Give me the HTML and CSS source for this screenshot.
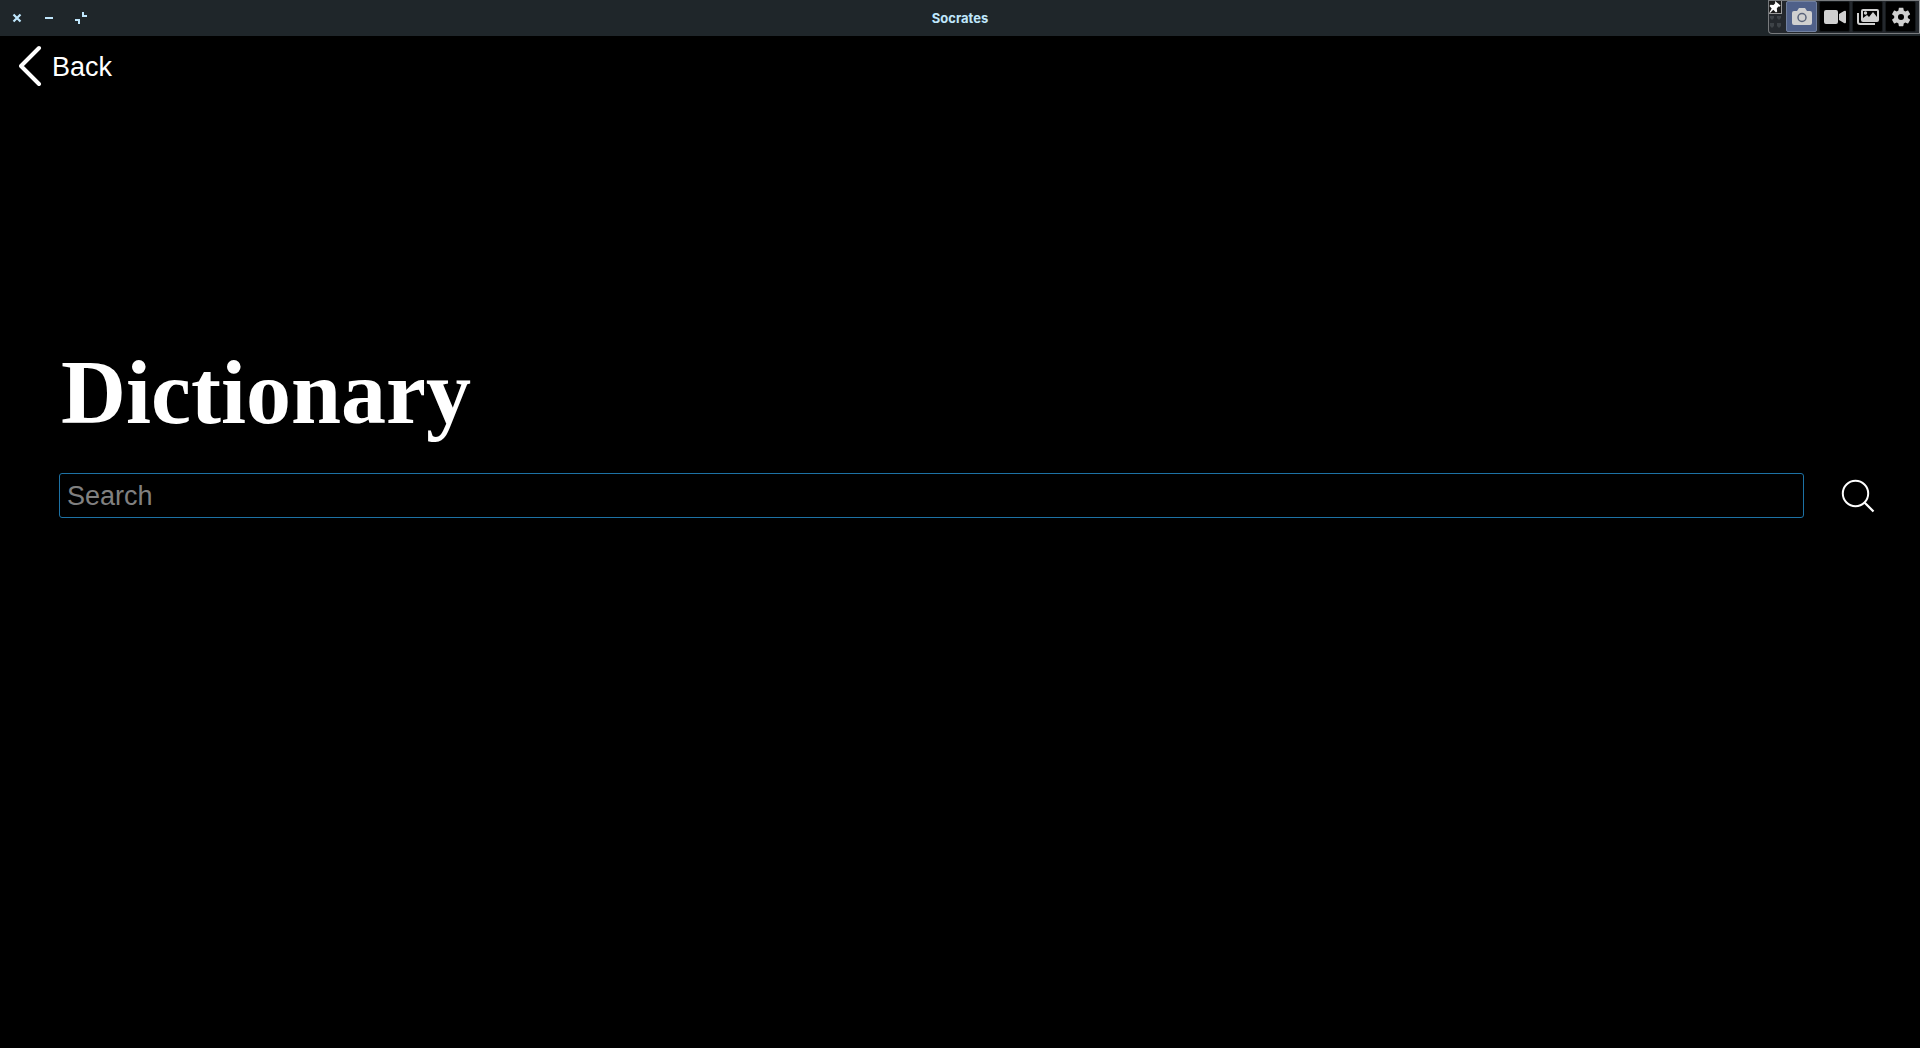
FILE: index.html
```html
<!DOCTYPE html>
<html lang="en">
<head>
<meta charset="utf-8">
<title>Socrates</title>
<link rel="stylesheet" href="styles.css">
</head>
<body>
<header class="titlebar">
  <div class="window-controls">
    <button class="window-button" aria-label="Close"><svg width="10" height="10" viewBox="0 0 10 10"><path d="M1.500 1.500l7 7M8.500 1.500l-7 7" stroke="currentColor" stroke-width="2.200"/></svg></button>
    <button class="window-button" aria-label="Minimize"><svg width="10" height="10" viewBox="0 0 10 10"><path d="M1 5h8" stroke="currentColor" stroke-width="2"/></svg></button>
    <button class="window-button" aria-label="Restore"><svg width="12" height="12" viewBox="0 0 12 12"><path d="M8 0v4h4M0 8h4v4" fill="none" stroke="currentColor" stroke-width="2"/></svg></button>
  </div>
  <span class="window-title">Socrates</span>
  <div class="capture-bar">
    <div class="grip">
      <button class="pin" aria-label="Pin"><svg width="12" height="12" viewBox="0 0 12 12"><path d="M6 0l5.500 4.500-1 1.300-1.200-.2-1.500 1.800.4 3.200-1.200.9-2.700-2.700L1 12l-.6-.6 2.300-3.800L.5 5l1-1.300 3 .3L6.200 2.300z" fill="#fff"/></svg></button>
      <svg width="15" height="16" viewBox="0 0 15 16"><path d="M1 2h4v2L3 6 1 4zM8 2h4v2l-2 2-2-2zM1 9h4v3l-2 2-2-2zM8 9h4v3l-2 2-2-2z" fill="#3d4247"/></svg>
    </div>
    <button class="tool tool-active" aria-label="Screenshot"><svg width="20" height="18" viewBox="0 0 20 18"><path d="M2 3h3l2-3h6l2 3h3q2 0 2 2v10q0 2-2 2H2q-2 0-2-2V5q0-2 2-2z" fill="#d0d0d0"/><circle cx="10" cy="9.500" r="4" fill="none" stroke="#59637a" stroke-width="1.500"/></svg></button>
    <button class="tool" aria-label="Record video"><svg width="24" height="16" viewBox="0 0 24 16"><path d="M3 1h10q2 0 2 2v10q0 2-2 2H3q-2 0-2-2V3q0-2 2-2zM16 5l5-3q2-1 2 1v10q0 2-2 1l-5-3z" fill="#d0d0d0"/></svg></button>
    <button class="tool" aria-label="Gallery"><svg width="22" height="18" viewBox="0 0 22 18"><path d="M1 5v9q0 2 2 2h15" fill="none" stroke="#d0d0d0" stroke-width="2"/><rect x="5" y="2" width="16" height="11" rx="1" fill="none" stroke="#d0d0d0" stroke-width="2"/><circle cx="8.500" cy="5" r="1.700" fill="#d0d0d0"/><path d="M6 12V10l4-3 2 2 4-5 4 5v3z" fill="#d0d0d0"/></svg></button>
    <button class="tool" aria-label="Settings"><svg width="22" height="22" viewBox="0 0 24 24"><path fill="#d0d0d0" d="M19.400 13c0-.3.100-.7.100-1s0-.7-.1-1l2.400-1.700c.2-.2.200-.4.100-.7l-2-3.500c-.1-.2-.4-.3-.7-.2l-2.500 1.100a8 8 0 0 0-1.700-1l-.4-2.600c0-.3-.3-.4-.5-.4h-4c-.3 0-.5.200-.5.400L9.200 5a8 8 0 0 0-1.700 1L5 4.900c-.3-.1-.6 0-.7.200l-2 3.500c-.1.300-.1.500.1.700L4.600 11a8 8 0 0 0 0 2l-2.200 1.700c-.2.200-.2.400-.1.700l2 3.500c.1.200.4.300.7.200L7.500 18a8 8 0 0 0 1.700 1l.4 2.600c0 .2.200.4.500.4h4c.2 0 .5-.1.500-.4L15 19a8 8 0 0 0 1.700-1l2.500 1.100c.3.100.6 0 .7-.2l2-3.500c.1-.3.100-.5-.1-.7zM12 15.300a3.300 3.300 0 1 1 0-6.600 3.300 3.300 0 0 1 0 6.600z"/></svg></button>
  </div>
</header>
<nav>
  <a class="back" href="#"><svg width="24" height="42" viewBox="0 0 24 42"><path d="M20 3L2 21l18 18" fill="none" stroke="#fff" stroke-width="4" stroke-linecap="round" stroke-linejoin="round"/></svg><span>Back</span></a>
</nav>
<main>
  <h1><label for="query">Dictionary</label></h1>
  <form class="search">
    <input class="query" id="query" type="text" placeholder="Search">
    <button type="button" aria-label="Search"><svg width="34" height="34" viewBox="0 0 34 34"><circle cx="14.500" cy="14.500" r="12.700" fill="none" stroke="#fff" stroke-width="2"/><path d="M23.500 23.500l9 9" stroke="#fff" stroke-width="2.200"/></svg></button>
  </form>
</main>
</body>
</html>
```
FILE: styles.css
```css
* { box-sizing: border-box; }
body {
  margin: 0;
  background: #000;
  color: #fff;
  font-family: "Liberation Sans", Arial, sans-serif;
}
button {
  padding: 0;
  border: 0;
  background: none;
  color: inherit;
  display: flex;
  align-items: center;
  justify-content: center;
}
svg { display: block; flex: none; }
.titlebar {
  height: 36px;
  display: grid;
  grid-template-columns: 1fr auto 1fr;
  align-items: center;
  background: #1f262a;
  color: #bfe6fc;
}
.window-controls {
  display: flex;
  gap: 16px;
  padding-left: 9px;
}
.window-button { width: 16px; height: 16px; }
.window-title {
  font: 700 13px/16px Inter, sans-serif;
  padding-bottom: 1px;
}
.capture-bar {
  justify-self: end;
  align-self: start;
  display: flex;
  gap: 2px;
  height: 34px;
  padding-right: 3px;
  background: #24282d;
  border: 1px solid #777a7d;
  border-right-color: #999c9f;
  border-bottom-left-radius: 4px;
}
.grip { width: 15px; }
.pin {
  width: 13px;
  height: 13px;
  background: #1c1c1c;
  border-right: 1px solid #999;
  border-bottom: 1px solid #999;
}
.tool {
  width: 31px;
  height: 31px;
  background: #000;
  border: 1px solid #15191c;
  border-radius: 2px;
}
.tool-active {
  background: #4f6089;
  border-color: #71809f;
}
.back {
  display: inline-flex;
  align-items: center;
  gap: 9px;
  margin: 9px 0 0 19px;
  color: #fff;
  font-size: 27px;
  line-height: 42px;
  text-decoration: none;
}
.back span { padding-top: 2px; line-height: 40px; }
main { padding: 248px 45px 0 59px; }
h1 {
  margin: 0 0 26px;
  padding-left: 2px;
  font: bold 90px/108px "Liberation Serif", "Times New Roman", serif;
}
.search {
  display: flex;
  align-items: center;
  gap: 37px;
}
.query {
  flex: 1;
  min-width: 0;
  height: 45px;
  padding: 2px 7px 0;
  border: 1px solid #1d72a5;
  border-radius: 3px;
  outline: 0;
  background: #000;
  color: #fff;
  font: 27px/32px "Liberation Sans", Arial, sans-serif;
}
.query::placeholder { color: #808080; }
```
